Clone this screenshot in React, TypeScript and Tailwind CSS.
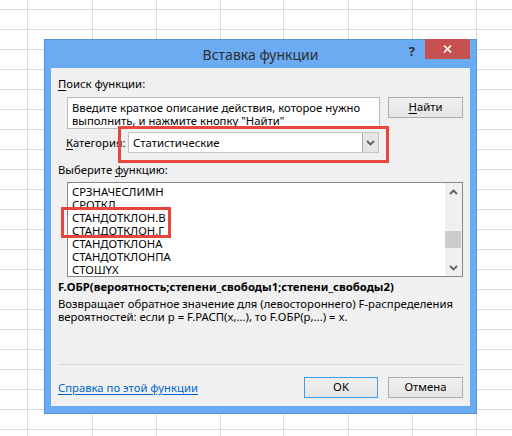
import React from "react";

// column widths of the sheet behind the dialog
const cols = [28, 65, 64, 64, 63, 65, 64, 64, 64];
const rowCount = 23;

const functions = [
  "СРЗНАЧЕСЛИМН",
  "СРОТКЛ",
  "СТАНДОТКЛОН.В",
  "СТАНДОТКЛОН.Г",
  "СТАНДОТКЛОНА",
  "СТАНДОТКЛОНПА",
  "СТОШYX",
];

function Chevron({ up }: { up?: boolean }) {
  return (
    <svg width="9" height="6" viewBox="0 0 9 6" className="block">
      <polyline
        points={up ? "1,5 4.5,1.5 8,5" : "1,1 4.5,4.5 8,1"}
        fill="none"
        stroke="#606060"
        strokeWidth="1.8"
      />
    </svg>
  );
}

function Button({ children, primary }: { children: React.ReactNode; primary?: boolean }) {
  return (
    <button
      className={`h-[21px] flex items-center justify-center bg-gradient-to-b from-[#f0f0f0] to-[#e5e5e5] text-black ${
        primary ? "w-[74px] border border-[#3c9cf0]" : "w-[75px] border border-[#acacac]"
      }`}
    >
      {children}
    </button>
  );
}

function Sheet() {
  const cells = [];
  for (let r = 0; r < rowCount; r++) {
    for (let c = 0; c < cols.length; c++) {
      cells.push(<div key={`${r}-${c}`} className="border-r border-b border-[#dcdcdc]" />);
    }
  }
  return (
    <div className="grid grid-cols-[28px_65px_64px_64px_63px_65px_64px_64px_64px] grid-rows-[10px_repeat(22,20px)]">
      {cells}
    </div>
  );
}

function InsertFunctionDialog() {
  return (
    <div className="absolute left-[44px] top-[39px] w-[433px] h-[375px] flex flex-col bg-[#6aabf2] border border-[#5592dd] px-[6px] pb-[7px]">
      {/* caption */}
      <div className="relative shrink-0 h-[28px] flex items-start">
        <div className="absolute inset-x-0 top-[5px] text-center text-[14px] leading-[20px] text-[#2e2e2e]">
          Вставка функции
        </div>
        <div className="ml-auto flex items-start">
          <span className="mt-[3px] mr-[10px] text-[13px] leading-[16px] font-bold text-[#303030]">?</span>
          <div className="-mt-px w-[45px] h-[20px] bg-[#c75050] flex items-center justify-center">
            <svg width="9" height="8" viewBox="0 0 9 8">
              <path d="M1 0.5 L8 7.5 M8 0.5 L1 7.5" stroke="#fff" strokeWidth="1.7" />
            </svg>
          </div>
        </div>
      </div>

      {/* body */}
      <div className="flex-1 min-h-0 flex flex-col bg-[#f0f0f0] px-[7px] text-[11.3px] text-black">
        <div className="mt-[8px] leading-[16px]">
          <span className="underline underline-offset-2">П</span>оиск функции:
        </div>

        <div className="mt-[5px] flex items-start justify-between">
          <div className="ml-[9px] w-[313px] h-[32px] bg-white border border-[#b9b9b9] px-[4px] pt-[3px] leading-[13px]">
            Введите краткое описание действия, которое нужно выполнить, и нажмите кнопку "Найти"
          </div>
          <Button>
            <span className="underline underline-offset-2">Н</span>айти
          </Button>
        </div>

        <div className="mt-[3px] flex items-center">
          <span className="ml-[8px] w-[62px] leading-[16px]">
            <span className="underline underline-offset-2">К</span>атегория:
          </span>
          <div className="w-[251px] h-[21px] flex bg-white border border-[#c4c4c4]">
            <span className="flex-1 pl-[4px] leading-[19px]">Статистические</span>
            <div className="w-[16px] h-full bg-[#e5e5e5] border-l border-[#acacac] flex items-center justify-center">
              <Chevron />
            </div>
          </div>
        </div>

        <div className="mt-[9px] leading-[16px]">
          Выберите <span className="underline underline-offset-2">ф</span>ункцию:
        </div>

        <div className="mt-[4px] ml-[9px] h-[95px] shrink-0 flex bg-white border border-[#828790] overflow-hidden">
          <ul className="flex-1 pl-[4px] pt-[2px] leading-[13px]">
            {functions.map((f) => (
              <li key={f}>{f}</li>
            ))}
          </ul>
          <div className="w-[17px] flex flex-col items-center bg-[#f0f0f0]">
            <div className="h-[17px] flex items-center justify-center">
              <Chevron up />
            </div>
            <div className="flex-1 w-full relative">
              <div className="absolute left-0 right-px top-[31px] h-[17px] bg-[#cdcdcd]" />
            </div>
            <div className="h-[17px] flex items-center justify-center">
              <Chevron />
            </div>
          </div>
        </div>

        <div className="mt-[2px] leading-[16px] font-bold">F.ОБР(вероятность;степени_свободы1;степени_свободы2)</div>
        <div className="mt-[2px] leading-[13px]">
          Возвращает обратное значение для (левостороннего) F-распределения
          <br />
          вероятностей: если p = F.РАСП(x,...), то F.ОБР(p,...) = x.
        </div>

        <div className="mt-[41px] h-px bg-[#dadada]" />

        <div className="mt-[12px] flex items-center">
          <a className="text-[#0066cc] underline underline-offset-2 leading-[16px]">Справка по этой функции</a>
          <div className="ml-auto flex gap-[10px]">
            <Button primary>OK</Button>
            <Button>Отмена</Button>
          </div>
        </div>
      </div>
    </div>
  );
}

export default function App() {
  return (
    <div className="relative w-[512px] h-[436px] overflow-hidden bg-white font-['Noto_Sans',sans-serif]">
      <Sheet />
      <InsertFunctionDialog />
      {/* red callouts */}
      <div className="absolute left-[118px] top-[126px] w-[271px] h-[37px] border-[3px] border-[#e8453f]" />
      <div className="absolute left-[61px] top-[207px] w-[110px] h-[31px] border-[3px] border-[#e8453f]" />
    </div>
  );
}
